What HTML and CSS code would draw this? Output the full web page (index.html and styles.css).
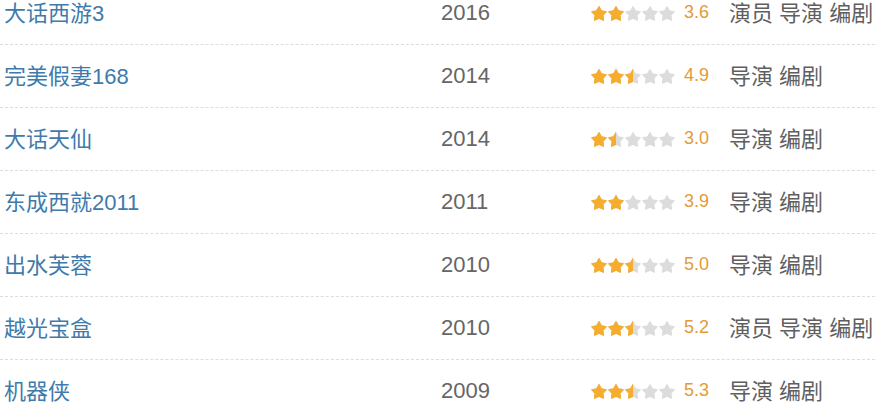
FILE: index.html
```html
<!DOCTYPE html>
<html lang="zh-CN">
<head>
    <meta charset="UTF-8">
    <meta name="viewport" content="width=device-width, initial-scale=1.0">
    <title>作品列表</title>

    <link rel="stylesheet" href="styles.css">
</head>
<body>

    <svg class="defs" width="0" height="0" aria-hidden="true">
        <symbol id="five" viewBox="0 0 85 15">
            <polygon points="8,0.4 10.5,4.8 15.4,5.7 12,9.5 12.6,14.4 8,12.4 3.4,14.4 4,9.5 0.6,5.7 5.5,4.8"/>
            <polygon transform="translate(17 0)" points="8,0.4 10.5,4.8 15.4,5.7 12,9.5 12.6,14.4 8,12.4 3.4,14.4 4,9.5 0.6,5.7 5.5,4.8"/>
            <polygon transform="translate(34 0)" points="8,0.4 10.5,4.8 15.4,5.7 12,9.5 12.6,14.4 8,12.4 3.4,14.4 4,9.5 0.6,5.7 5.5,4.8"/>
            <polygon transform="translate(51 0)" points="8,0.4 10.5,4.8 15.4,5.7 12,9.5 12.6,14.4 8,12.4 3.4,14.4 4,9.5 0.6,5.7 5.5,4.8"/>
            <polygon transform="translate(68 0)" points="8,0.4 10.5,4.8 15.4,5.7 12,9.5 12.6,14.4 8,12.4 3.4,14.4 4,9.5 0.6,5.7 5.5,4.8"/>
        </symbol>
    </svg>

    <ul class="works">
        <li class="work">
            <a class="title" href="#">大话西游3</a>
            <span class="year">2016</span>
            <span class="stars">
                <svg class="stars-off" viewBox="0 0 85 15"><use href="#five" width="85" height="15"/></svg>
                <span class="stars-on" style="width: 33px"><svg viewBox="0 0 85 15"><use href="#five" width="85" height="15"/></svg></span>
            </span>
            <span class="rating">3.6</span>
            <span class="roles">演员 导演 编剧</span>
        </li>
        <li class="work">
            <a class="title" href="#">完美假妻168</a>
            <span class="year">2014</span>
            <span class="stars">
                <svg class="stars-off" viewBox="0 0 85 15"><use href="#five" width="85" height="15"/></svg>
                <span class="stars-on" style="width: 42px"><svg viewBox="0 0 85 15"><use href="#five" width="85" height="15"/></svg></span>
            </span>
            <span class="rating">4.9</span>
            <span class="roles">导演 编剧</span>
        </li>
        <li class="work">
            <a class="title" href="#">大话天仙</a>
            <span class="year">2014</span>
            <span class="stars">
                <svg class="stars-off" viewBox="0 0 85 15"><use href="#five" width="85" height="15"/></svg>
                <span class="stars-on" style="width: 25px"><svg viewBox="0 0 85 15"><use href="#five" width="85" height="15"/></svg></span>
            </span>
            <span class="rating">3.0</span>
            <span class="roles">导演 编剧</span>
        </li>
        <li class="work">
            <a class="title" href="#">东成西就2011</a>
            <span class="year">2011</span>
            <span class="stars">
                <svg class="stars-off" viewBox="0 0 85 15"><use href="#five" width="85" height="15"/></svg>
                <span class="stars-on" style="width: 33px"><svg viewBox="0 0 85 15"><use href="#five" width="85" height="15"/></svg></span>
            </span>
            <span class="rating">3.9</span>
            <span class="roles">导演 编剧</span>
        </li>
        <li class="work">
            <a class="title" href="#">出水芙蓉</a>
            <span class="year">2010</span>
            <span class="stars">
                <svg class="stars-off" viewBox="0 0 85 15"><use href="#five" width="85" height="15"/></svg>
                <span class="stars-on" style="width: 42px"><svg viewBox="0 0 85 15"><use href="#five" width="85" height="15"/></svg></span>
            </span>
            <span class="rating">5.0</span>
            <span class="roles">导演 编剧</span>
        </li>
        <li class="work">
            <a class="title" href="#">越光宝盒</a>
            <span class="year">2010</span>
            <span class="stars">
                <svg class="stars-off" viewBox="0 0 85 15"><use href="#five" width="85" height="15"/></svg>
                <span class="stars-on" style="width: 42px"><svg viewBox="0 0 85 15"><use href="#five" width="85" height="15"/></svg></span>
            </span>
            <span class="rating">5.2</span>
            <span class="roles">演员 导演 编剧</span>
        </li>
        <li class="work">
            <a class="title" href="#">机器侠</a>
            <span class="year">2009</span>
            <span class="stars">
                <svg class="stars-off" viewBox="0 0 85 15"><use href="#five" width="85" height="15"/></svg>
                <span class="stars-on" style="width: 42px"><svg viewBox="0 0 85 15"><use href="#five" width="85" height="15"/></svg></span>
            </span>
            <span class="rating">5.3</span>
            <span class="roles">导演 编剧</span>
        </li>
    </ul>

</body>
</html>
```

FILE: styles.css
```css
body {
    font-family: "Liberation Sans", Arial, "Noto Sans CJK SC", sans-serif;
    background-color: #fff;
    margin: 0;
    padding: 0;
    overflow: hidden;
}

.defs {
    position: absolute;
    width: 0;
    height: 0;
}

.works {
    list-style: none;
    margin: -18px 0 0 0;
    padding: 0;
}

.work {
    display: grid;
    grid-template-columns: 437px 150px 93px 45px 1fr;
    align-items: center;
    height: 62px;
    padding-left: 4px;
    border-bottom: 1px dashed #ddd;
    font-size: 22px;
    line-height: 57px;
}

.title {
    color: #3e7bab;
    text-decoration: none;
    white-space: nowrap;
    padding-top: 1px;
}

.year {
    color: #666;
    padding-bottom: 2px;
}

.stars {
    position: relative;
    width: 85px;
    height: 15px;
}

.stars svg {
    display: block;
    width: 85px;
    height: 15px;
    overflow: visible;
}

.stars-off {
    fill: #dcdcdc;
    stroke: #dcdcdc;
    stroke-width: 1;
    stroke-linejoin: round;
}

.stars-on {
    position: absolute;
    left: 0;
    top: 0;
    height: 15px;
    overflow: hidden;
    fill: #f6ac2c;
    stroke: #f6ac2c;
    stroke-width: 1;
    stroke-linejoin: round;
}

.rating {
    color: #e29b36;
    font-size: 18px;
    padding-bottom: 1px;
}

.roles {
    color: #5f5f5f;
    white-space: nowrap;
    padding-top: 1px;
}
```
